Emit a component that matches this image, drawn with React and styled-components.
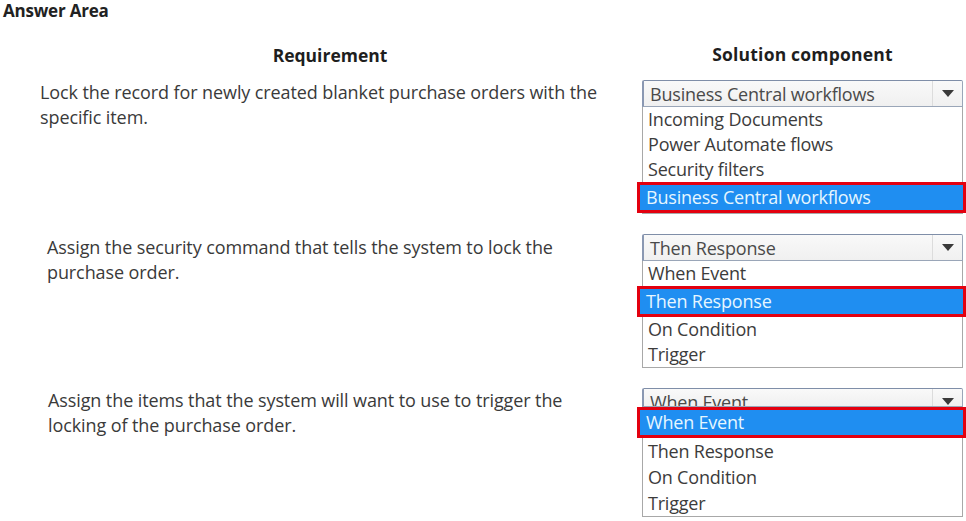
import React from "react";
import styled, { createGlobalStyle } from "styled-components";

const GlobalStyle = createGlobalStyle`
  html, body {
    margin: 0;
    padding: 0;
    background: #ffffff;
  }
  body {
    font-family: "Open Sans", "Noto Sans", sans-serif;
    color: #333;
  }
`;

const Page = styled.div`
  width: 966px;
  height: 521px;
  overflow: hidden;
  background: #fff;
`;

const Title = styled.h1`
  margin: 0;
  padding: 0 0 0 3px;
  height: 24px;
  line-height: 22px;
  font-size: 17px;
  font-weight: 700;
  color: #222;
  letter-spacing: -0.2px;
`;

const Grid = styled.div`
  display: grid;
  grid-template-columns: 642px 321px;
  row-gap: 20px;
  padding-top: 21px;
`;

const ColHead = styled.div`
  font-size: 17.5px;
  font-weight: 700;
  color: #1e1e1e;
  text-align: center;
  height: 15px;
  line-height: 20px;
  padding-left: ${(p) => p.$shift || 0}px;
  margin-top: -${(p) => p.$lift || 0}px;
  letter-spacing: ${(p) => p.$track || 0}px;
`;

const Requirement = styled.p`
  box-sizing: border-box;
  margin: 0;
  padding: ${(p) => p.$top || 0}px 0 0 ${(p) => p.$indent}px;
  width: 605px;
  font-size: 18px;
  line-height: 25px;
  color: #3a3a3a;
  letter-spacing: -0.1px;
`;

const Dropdown = styled.div`
  display: flex;
  flex-direction: column;
  width: 321px;
  font-size: 18px;
  color: #3c3c3c;
`;

const Header = styled.div`
  display: flex;
  height: ${(p) => p.$h || 27}px;
  overflow: hidden;
  border: 1px solid #9aa6b8;
  border-top-color: #7f8ea8;
  border-left: 2px solid #8a98b2;
  border-radius: 2px 2px 0 0;
  background: linear-gradient(#f9f9f9, #f0f0f0);
  box-sizing: border-box;
`;

const HeaderText = styled.span`
  flex: 1;
  padding: 0 0 0 6px;
  line-height: 26px;
  color: #4a4a4a;
  white-space: nowrap;
  letter-spacing: -0.2px;
`;

const Arrow = styled.span`
  width: 30px;
  display: flex;
  align-items: flex-start;
  justify-content: center;
  padding-top: 9px;
  border-left: 1px solid #dcdcdc;
  box-sizing: border-box;
`;

const List = styled.div`
  display: flex;
  flex-direction: column;
  border: 1px solid #a8a8a8;
  border-top: none;
`;

const Item = styled.div`
  height: ${(p) => (p.$selected ? 31 : p.$h || 25)}px;
  line-height: ${(p) => p.$h || 25}px;
  padding-left: 5px;
  white-space: nowrap;
  box-sizing: border-box;
  letter-spacing: -0.2px;
  ${(p) =>
    p.$selected &&
    `
    margin: 0 -4px 0 -6px;
    border: 3px solid #e3000f;
    background: #1f8ef1;
    color: #e6f6ff;
    line-height: 25px;
    padding-left: 6px;
  `}
`;

const Caret = () => (
  <svg width="12" height="7" viewBox="0 0 12 7">
    <path d="M0 0 H12 L6 7 Z" fill="#3a3a3a" />
  </svg>
);

const rows = [
  {
    text: "Lock the record for newly created blanket purchase orders with the specific item.",
    indent: 40,
    top: 0,
    value: "Business Central workflows",
    options: ["Incoming Documents", "Power Automate flows", "Security filters", "Business Central workflows"],
    selected: 3,
  },
  {
    text: "Assign the security command that tells the system to lock the purchase order.",
    indent: 47,
    top: 1,
    value: "Then Response",
    options: ["When Event", "Then Response", "On Condition", "Trigger"],
    selected: 1,
  },
  {
    text: "Assign the items that the system will want to use to trigger the locking of the purchase order.",
    indent: 48,
    top: 0,
    value: "When Event",
    headerH: 19,
    itemH: 26,
    options: ["When Event", "Then Response", "On Condition", "Trigger"],
    selected: 0,
  },
];

export default function App() {
  return (
    <Page>
      <GlobalStyle />
      <Title>Answer Area</Title>
      <Grid>
        <ColHead $shift={18}>Requirement</ColHead>
        <ColHead $shift={-12} $lift={1} $track={0.2}>Solution component</ColHead>
        {rows.map((r) => (
          <React.Fragment key={r.value + r.indent}>
            <Requirement $indent={r.indent} $top={r.top}>
              {r.text}
            </Requirement>
            <Dropdown>
              <Header $h={r.headerH}>
                <HeaderText>{r.value}</HeaderText>
                <Arrow>
                  <Caret />
                </Arrow>
              </Header>
              <List>
                {r.options.map((o, i) => (
                  <Item key={o} $h={r.itemH} $selected={i === r.selected}>
                    {o}
                  </Item>
                ))}
              </List>
            </Dropdown>
          </React.Fragment>
        ))}
      </Grid>
    </Page>
  );
}
